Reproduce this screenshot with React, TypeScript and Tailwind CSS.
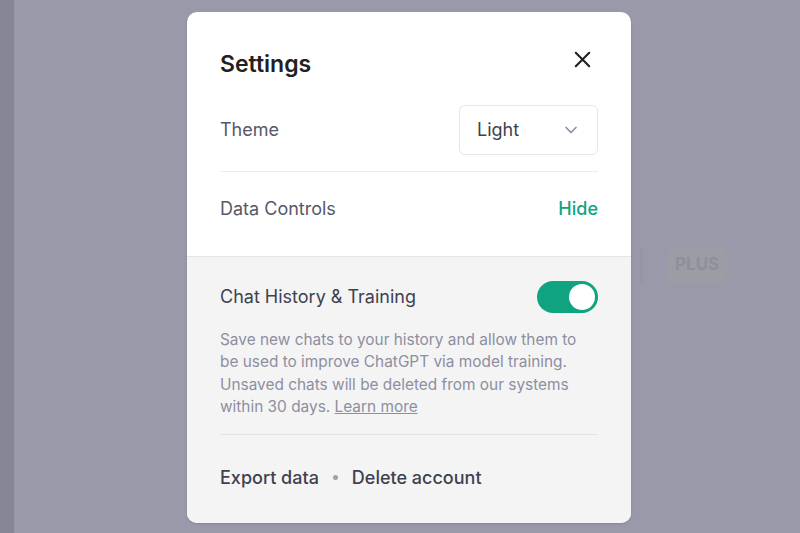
import React, { useState } from 'react';

const App: React.FC = () => {
  const [theme] = useState('Light');
  const [historyOn, setHistoryOn] = useState(true);

  return (
    <div className="relative flex h-[533px] w-[800px] overflow-hidden bg-[#9a99a9] font-['Inter','Noto_Sans',sans-serif]">
      {/* sidebar edge */}
      <div className="h-full w-[14px] bg-[#878696]" />

      {/* faint page content behind the dim overlay */}
      <div className="absolute left-[667px] top-[248px] rounded-md bg-[#9c9da4] px-2 py-1 text-[17px] font-bold text-[#8f8f9c]">
        PLUS
      </div>
      <div className="absolute left-[640px] top-[248px] h-[34px] w-[3px] bg-[#9693a5]" />

      <div className="flex flex-1 justify-start pl-[173px] pt-[12px]">
        <div className="relative z-10 flex h-[511px] w-[444px] flex-col overflow-hidden rounded-[10px] bg-white shadow-sm">
          {/* top */}
          <div className="flex flex-col px-[33px]">
            <div className="flex items-center justify-between pt-[35px]">
              <h2 className="text-[23px] font-semibold text-[#202123]">Settings</h2>
              <button className="mb-[10px] mr-[4px] text-[#202123]">
                <svg width="23" height="23" viewBox="0 0 24 24" fill="none" stroke="currentColor" strokeWidth="2.2" strokeLinecap="round">
                  <path d="M5 5l14 14M19 5L5 19" />
                </svg>
              </button>
            </div>

            <div className="mt-[23px] flex items-center justify-between border-b border-[#ececf1] pb-[16px]">
              <span className="text-[18px] text-[#565869]">Theme</span>
              <div className="flex h-[50px] w-[139px] items-center justify-between rounded-md border border-[#e5e5ea] pl-[17px] pr-[16px]">
                <span className="text-[18px] text-[#40414f]">{theme}</span>
                <svg width="20" height="20" viewBox="0 0 24 24" fill="none" stroke="#8e8ea0" strokeWidth="2" strokeLinecap="round" strokeLinejoin="round">
                  <path d="M6 9l6 6 6-6" />
                </svg>
              </div>
            </div>

            <div className="flex h-[84px] items-center justify-between pb-[10px]">
              <span className="text-[18px] text-[#565869]">Data Controls</span>
              <button className="text-[18px] font-medium text-[#10a37f]">Hide</button>
            </div>
          </div>

          {/* bottom */}
          <div className="flex flex-1 flex-col border-t border-[#e5e5e5] bg-[#f4f4f5] px-[33px]">
            <div className="mt-[24px] flex items-center justify-between">
              <span className="text-[18px] text-[#40414f]">Chat History &amp; Training</span>
              <button
                onClick={() => setHistoryOn(!historyOn)}
                className={`flex h-[32px] w-[61px] items-center rounded-full px-[3px] ${historyOn ? 'justify-end bg-[#10a37f]' : 'justify-start bg-gray-300'}`}
              >
                <span className="block h-[26px] w-[26px] rounded-full bg-white" />
              </button>
            </div>

            <p className="mt-[16px] text-[15.4px] leading-[22.5px] text-[#8e8ea0]">
              Save new chats to your history and allow them to be used to improve ChatGPT via model training. Unsaved chats will be deleted from our systems within 30 days.{' '}
              <a className="underline">Learn more</a>
            </p>

            <div className="mt-[15px] border-t border-[#e3e3e6]" />

            <div className="mt-[29px] flex items-center gap-[14px] text-[18px] font-medium text-[#40414f]">
              <span>Export data</span>
              <span className="h-[5px] w-[5px] rounded-full bg-[#a0a0aa]" />
              <span>Delete account</span>
            </div>
          </div>
        </div>
      </div>
    </div>
  );
};

export default App;
